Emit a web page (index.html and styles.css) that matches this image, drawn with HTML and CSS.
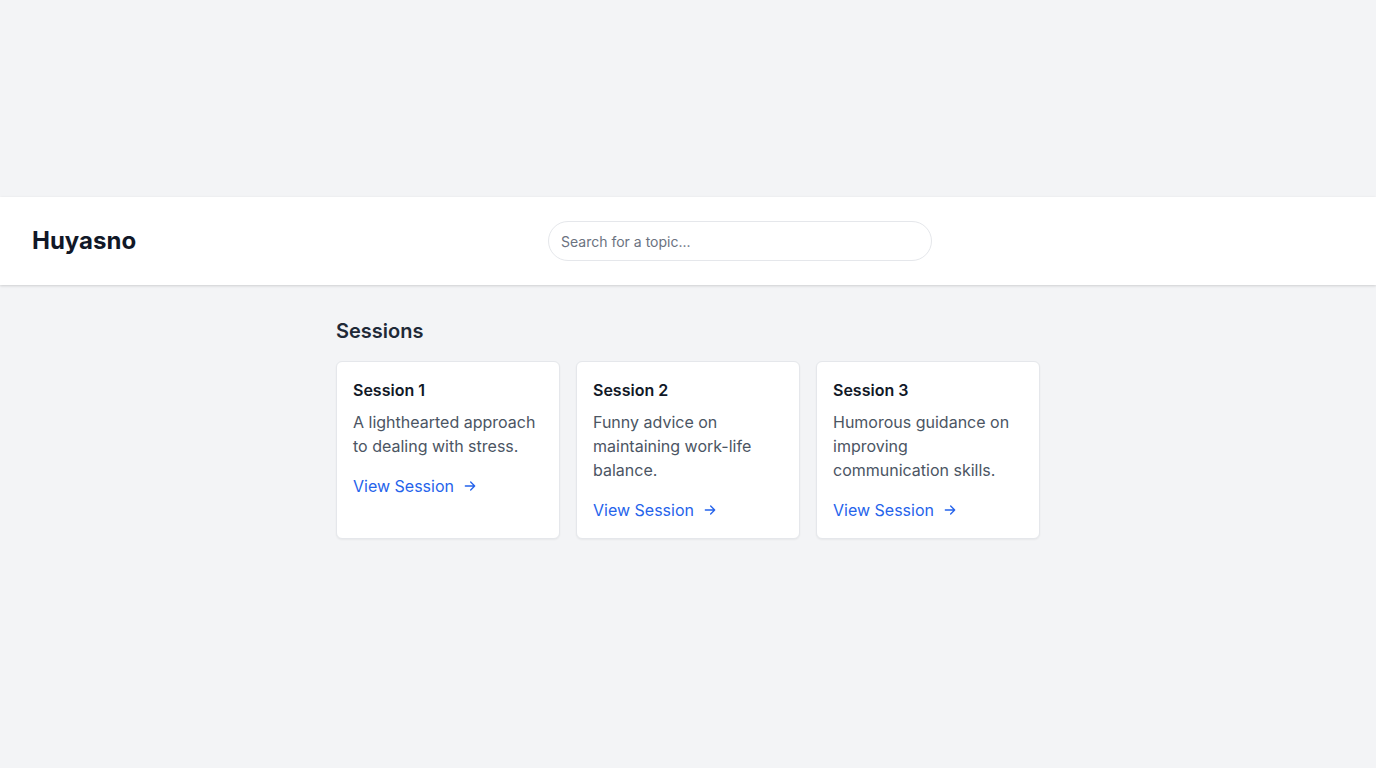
FILE: index.html
```html
<!DOCTYPE html>
<html lang="en">
<head>
<meta charset="utf-8">
<title>Huyasno</title>
<link rel="stylesheet" href="styles.css">
</head>
<body>
<div class="page">
  <header class="topbar">
    <div class="logo">Huyasno</div>
    <input class="search" type="text" placeholder="Search for a topic...">
    <div class="spacer"></div>
  </header>
  <main class="content">
    <h2 class="heading">Sessions</h2>
    <div class="grid">
      <div class="card">
        <h3 class="card-title">Session 1</h3>
        <p class="card-text">A lighthearted approach to dealing with stress.</p>
        <a class="card-link" href="#">View Session
          <svg class="arrow" viewBox="0 0 24 24" fill="none" stroke="currentColor" stroke-width="2" stroke-linecap="round" stroke-linejoin="round"><path d="M5 12h14M13 6l6 6-6 6"/></svg>
        </a>
      </div>
      <div class="card">
        <h3 class="card-title">Session 2</h3>
        <p class="card-text">Funny advice on maintaining work-life balance.</p>
        <a class="card-link" href="#">View Session
          <svg class="arrow" viewBox="0 0 24 24" fill="none" stroke="currentColor" stroke-width="2" stroke-linecap="round" stroke-linejoin="round"><path d="M5 12h14M13 6l6 6-6 6"/></svg>
        </a>
      </div>
      <div class="card">
        <h3 class="card-title">Session 3</h3>
        <p class="card-text">Humorous guidance on improving communication skills.</p>
        <a class="card-link" href="#">View Session
          <svg class="arrow" viewBox="0 0 24 24" fill="none" stroke="currentColor" stroke-width="2" stroke-linecap="round" stroke-linejoin="round"><path d="M5 12h14M13 6l6 6-6 6"/></svg>
        </a>
      </div>
    </div>
  </main>
</div>
</body>
</html>
```
FILE: styles.css
```css
* { box-sizing: border-box; }
html, body { margin: 0; padding: 0; }
body {
  background: #f3f4f6;
  font-family: Inter, "Noto Sans", sans-serif;
  color: #111827;
}
.page {
  min-height: 100vh;
  display: flex;
  flex-direction: column;
  justify-content: center;
}
.topbar {
  background: #ffffff;
  height: 88px;
  padding: 0 32px;
  display: flex;
  align-items: center;
  justify-content: space-between;
  box-shadow: 0 1px 3px rgba(0,0,0,0.1), 0 1px 2px rgba(0,0,0,0.06);
}
.logo {
  font-size: 24px;
  line-height: 32px;
  font-weight: 700;
  color: #111827;
}
.search {
  width: 384px;
  height: 40px;
  border: 1px solid #e5e7eb;
  border-radius: 9999px;
  padding: 0 12px;
  font-family: inherit;
  font-size: 14px;
  color: #111827;
  outline: none;
  background: #fff;
}
.search::placeholder { color: #6b7280; }
.spacer { width: 0; }
.content {
  width: 768px;
  margin: 0 auto;
  padding: 32px;
}
.heading {
  margin: 0 0 16px;
  font-size: 20px;
  line-height: 28px;
  font-weight: 600;
  color: #1f2937;
}
.grid {
  display: grid;
  grid-template-columns: repeat(3, 1fr);
  gap: 16px;
}
.card {
  background: #fff;
  border: 1px solid #e5e7eb;
  border-radius: 6px;
  padding: 16px;
  box-shadow: 0 1px 2px rgba(0,0,0,0.05);
}
.card-title {
  margin: 0 0 8px;
  font-size: 16px;
  line-height: 24px;
  font-weight: 600;
  color: #111827;
}
.card-text {
  margin: 0 0 16px;
  font-size: 16px;
  line-height: 24px;
  color: #4b5563;
}
.card-link {
  display: inline-flex;
  align-items: center;
  gap: 8px;
  font-size: 16px;
  line-height: 24px;
  color: #2563eb;
  text-decoration: none;
}
.arrow { width: 16px; height: 16px; }
```
